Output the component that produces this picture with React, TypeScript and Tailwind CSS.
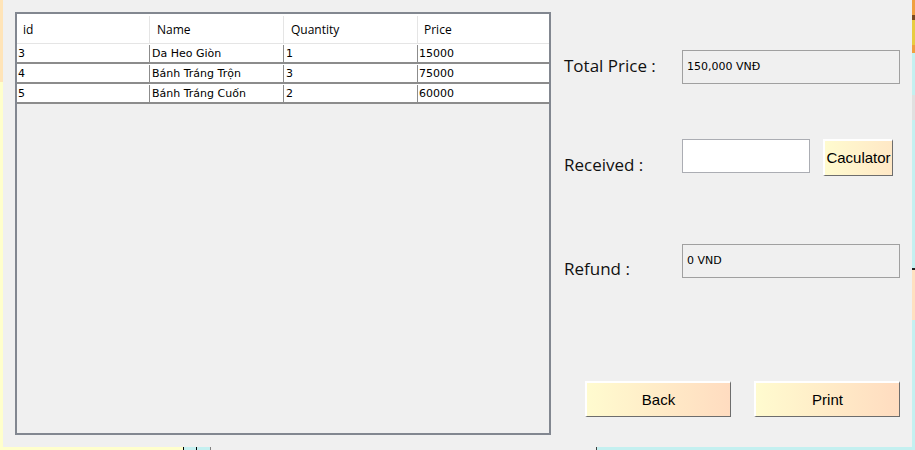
const rows = [
  { id: "3", name: "Da Heo Giòn", qty: "1", price: "15000" },
  { id: "4", name: "Bánh Tráng Trộn", qty: "3", price: "75000" },
  { id: "5", name: "Bánh Tráng Cuốn", qty: "2", price: "60000" },
];

function OrderGrid() {
  return (
    <div className="flex h-[423px] w-[536px] flex-col border-2 border-[#828790] bg-[#f0f0f0]">
      <div className="grid h-[30px] grid-cols-[133px_134px_134px_131px] border-b border-[#e5e5e5] bg-white pt-[2px] font-['Open_Sans',sans-serif] text-[12px] leading-[27px] text-[#000]">
        <div className="border-r border-[#e5e5e5] pl-[6px]">id</div>
        <div className="border-r border-[#e5e5e5] pl-[7px]">Name</div>
        <div className="border-r border-[#e5e5e5] pl-[7px]">Quantity</div>
        <div className="pl-[6px]">Price</div>
      </div>
      {rows.map((r) => (
        <div
          key={r.id}
          className="grid h-[20px] grid-cols-[133px_134px_134px_131px] border-b-2 border-[#8c8c8c] bg-white pt-[1px] font-['DejaVu_Sans',sans-serif] text-[11px] leading-[17px] text-black"
        >
          <div className="border-r border-[#8c8c8c] pl-[1px]">{r.id}</div>
          <div className="border-r border-[#8c8c8c] pl-[2px]">{r.name}</div>
          <div className="border-r border-[#8c8c8c] pl-[2px]">{r.qty}</div>
          <div className="pl-[1px]">{r.price}</div>
        </div>
      ))}
    </div>
  );
}

function ReadBox({ text }: { text: string }) {
  return (
    <div className="flex h-[34px] w-[218px] items-center border border-[#a0a0a0] bg-[#f0f0f0] pt-[1px] pl-[4px] font-['DejaVu_Sans',sans-serif] text-[11px] text-black">
      {text}
    </div>
  );
}

function WinButton({ label, className }: { label: string; className: string }) {
  return (
    <button
      type="button"
      className={`flex items-center justify-center border-t-2 border-l-2 border-r border-b border-t-white border-l-white border-r-[#6d6d6d] border-b-[#6d6d6d] bg-gradient-to-r font-['Liberation_Sans',sans-serif] text-[15px] text-black ${className}`}
    >
      {label}
    </button>
  );
}

export default function App() {
  return (
    <div className="flex h-[450px] w-[915px] flex-col overflow-hidden bg-[#f0f0f0]">
      <div className="flex h-[447px]">
        <div className="flex w-[3px] flex-col">
          <div className="h-[82px] bg-[#ffe4b8]" />
          <div className="flex-1 bg-[#ffffcc]" />
        </div>

        <div className="flex flex-1 items-start bg-[#f0f0f0] pt-[12px] pl-[12px]">
          <OrderGrid />

          <div className="ml-[13px] mt-[38px] flex flex-col font-['Open_Sans',sans-serif] text-[17px] text-[#111]">
            <div className="flex items-start">
              <div className="mt-[5px] w-[118px] leading-[22px]">Total Price :</div>
              <ReadBox text="150,000 VNĐ" />
            </div>

            <div className="mt-[55px] flex items-start">
              <div className="mt-[15px] w-[118px] leading-[22px]">Received :</div>
              <div className="h-[34px] w-[128px] border border-[#abadb3] bg-white" />
              <WinButton label="Caculator" className="ml-[13px] h-[37px] w-[70px] pt-[1px] from-[#fffbcf] to-[#ffe8c6]" />
            </div>

            <div className="mt-[68px] flex items-start">
              <div className="mt-[14px] w-[118px] leading-[22px]">Refund :</div>
              <ReadBox text="0 VND" />
            </div>

            <div className="mt-[101px] flex gap-[23px] pl-[21px]">
              <WinButton label="Back" className="h-[36px] w-[146px] pt-[1px] from-[#fffbcf] to-[#ffdcc0]" />
              <WinButton label="Print" className="h-[36px] w-[146px] pt-[1px] from-[#fffbcf] to-[#ffdcc0]" />
            </div>
          </div>
        </div>

        <div className="flex w-[3px] flex-col">
          <div className="h-[15px] bg-[#f0a040]" />
          <div className="h-[5px] bg-[#7a4a20]" />
          <div className="h-[25px] bg-[#e8cc40]" />
          <div className="h-[8px] bg-[#f0a040]" />
          <div className="h-[42px] bg-[#c4f0f0]" />
          <div className="h-[25px] bg-[#e0e0e0]" />
          <div className="h-[148px] bg-[#c4f0f0]" />
          <div className="h-[2px] bg-[#202020]" />
          <div className="h-[50px] bg-[#ffe0c0]" />
          <div className="flex-1 bg-[#c4f0f0]" />
        </div>
      </div>

      <div className="flex h-[3px]">
        <div className="w-[183px] bg-[#ffffcc]" />
        <div className="w-[1px] bg-black" />
        <div className="w-[12px] bg-[#c4f0f0]" />
        <div className="w-[1px] bg-black" />
        <div className="w-[13px] bg-[#c4f0f0]" />
        <div className="w-[1px] bg-[#808080]" />
        <div className="w-[385px] bg-[#f0f0f0]" />
        <div className="w-[1px] bg-[#404040]" />
        <div className="flex-1 bg-[#c4f0f0]" />
      </div>
    </div>
  );
}
